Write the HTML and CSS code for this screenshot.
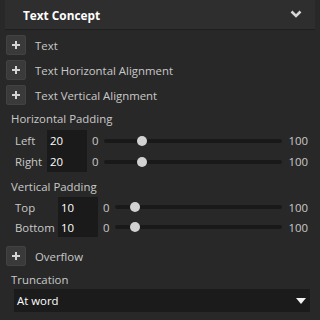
FILE: index.html
```html
<!DOCTYPE html>
<html lang="en">
<head>
  <meta charset="UTF-8" />
  <title>Text Concept</title>
  <link rel="stylesheet" href="styles.css">
</head>
<body>
  <div class="panel">
    <div class="panel-head">
      <span class="panel-title">Text Concept</span>
      <svg class="chevron" width="12" height="8" viewBox="0 0 12 8"><polyline points="1.5,1.5 6,6 10.5,1.5" fill="none" stroke="#d6d6d6" stroke-width="2.6"/></svg>
    </div>

    <div class="groups">
      <div class="group-row"><span class="add-btn"></span><span class="group-label">Text</span></div>
      <div class="group-row"><span class="add-btn"></span><span class="group-label">Text Horizontal Alignment</span></div>
      <div class="group-row"><span class="add-btn"></span><span class="group-label">Text Vertical Alignment</span></div>
    </div>

    <div class="section-title first">Horizontal Padding</div>
    <div class="slider-row tall">
      <span class="row-label">Left</span>
      <span class="num-box">20</span>
      <span class="range-min">0</span>
      <div class="track"><span class="thumb" style="left: calc((100% - 10px) * 0.2)"></span></div>
      <span class="range-max">100</span>
    </div>
    <div class="slider-row tall">
      <span class="row-label">Right</span>
      <span class="num-box">20</span>
      <span class="range-min">0</span>
      <div class="track"><span class="thumb" style="left: calc((100% - 10px) * 0.2)"></span></div>
      <span class="range-max">100</span>
    </div>

    <div class="section-title second">Vertical Padding</div>
    <div class="slider-row wide">
      <span class="row-label">Top</span>
      <span class="num-box">10</span>
      <span class="range-min">0</span>
      <div class="track"><span class="thumb" style="left: calc((100% - 10px) * 0.1)"></span></div>
      <span class="range-max">100</span>
    </div>
    <div class="slider-row wide">
      <span class="row-label">Bottom</span>
      <span class="num-box">10</span>
      <span class="range-min">0</span>
      <div class="track"><span class="thumb" style="left: calc((100% - 10px) * 0.1)"></span></div>
      <span class="range-max">100</span>
    </div>

    <div class="group-row overflow"><span class="add-btn"></span><span class="group-label">Overflow</span></div>

    <div class="section-title trunc">Truncation</div>
    <div class="dropdown">
      <span>At word</span>
      <svg width="10" height="6" viewBox="0 0 10 6"><polygon points="0,0 10,0 5,6" fill="#f2f2f2"/></svg>
    </div>
  </div>
</body>
</html>
```

FILE: styles.css
```css
body {
  margin: 0;
  background: #282828;
  color: #c9c9c9;
  font-family: "Open Sans", "Noto Sans", sans-serif;
  font-size: 11.4px;
  overflow: hidden;
}
.panel {
  padding: 0 5px;
}
.panel-head {
  height: 29px;
  background: #2e2e2e;
  border-bottom: 1px solid #1f1f1f;
  display: flex;
  align-items: center;
  justify-content: space-between;
  padding: 0 13px 0 18px;
}
.panel-title {
  color: #ffffff;
  font-weight: bold;
  font-size: 11.8px;
}
.chevron {
  display: block;
  margin-top: -2px;
}
.groups {
  display: flex;
  flex-direction: column;
  gap: 5px;
  margin-top: 5px;
}
.group-row {
  display: flex;
  align-items: center;
  gap: 9px;
  height: 20px;
  padding-left: 1px;
}
.add-btn {
  width: 20px;
  height: 20px;
  box-sizing: border-box;
  background: #3a3a3a;
  border: 1px solid #424242;
  border-radius: 2px;
  position: relative;
}
.add-btn::before, .add-btn::after {
  content: '';
  position: absolute;
  background: #d4d4d4;
  left: 50%;
  top: 50%;
}
.add-btn::before {
  width: 8px;
  height: 2px;
  margin: -1px 0 0 -4px;
}
.add-btn::after {
  width: 2px;
  height: 8px;
  margin: -4px 0 0 -1px;
}
.group-label {
  color: #c9c9c9;
}
.section-title {
  padding-left: 6px;
  line-height: 16px;
  margin: 6px 0 3px;
}
.section-title.second {
  margin: 7px 0 2px;
}
.slider-row {
  display: flex;
  align-items: center;
  height: 21px;
  padding: 0 7px 0 10px;
}
.slider-row.wide {
  height: 20px;
}
.row-label {
  width: 32px;
  flex-shrink: 0;
}
.slider-row.wide .row-label {
  width: 43px;
}
.num-box {
  width: 40px;
  height: 100%;
  box-sizing: border-box;
  background: #1a1a1a;
  color: #ffffff;
  padding-left: 3px;
  display: flex;
  align-items: center;
  flex-shrink: 0;
}
.range-min {
  margin: 0 5px;
}
.track {
  flex: 1;
  height: 4px;
  background: #191919;
  border-radius: 2px;
  position: relative;
}
.thumb {
  position: absolute;
  top: -3px;
  width: 10px;
  height: 10px;
  border-radius: 50%;
  background: #d2d2d2;
}
.range-max {
  margin-left: 6px;
}
.overflow {
  margin-top: 9px;
}
.section-title.trunc {
  margin: 6px 0 1px;
}
.dropdown {
  margin: 0 5px 0 9px;
  height: 23px;
  background: #1b1b1b;
  color: #ffffff;
  display: flex;
  align-items: center;
  justify-content: space-between;
  padding: 0 4px 0 3px;
}
.dropdown svg {
  display: block;
}
```
